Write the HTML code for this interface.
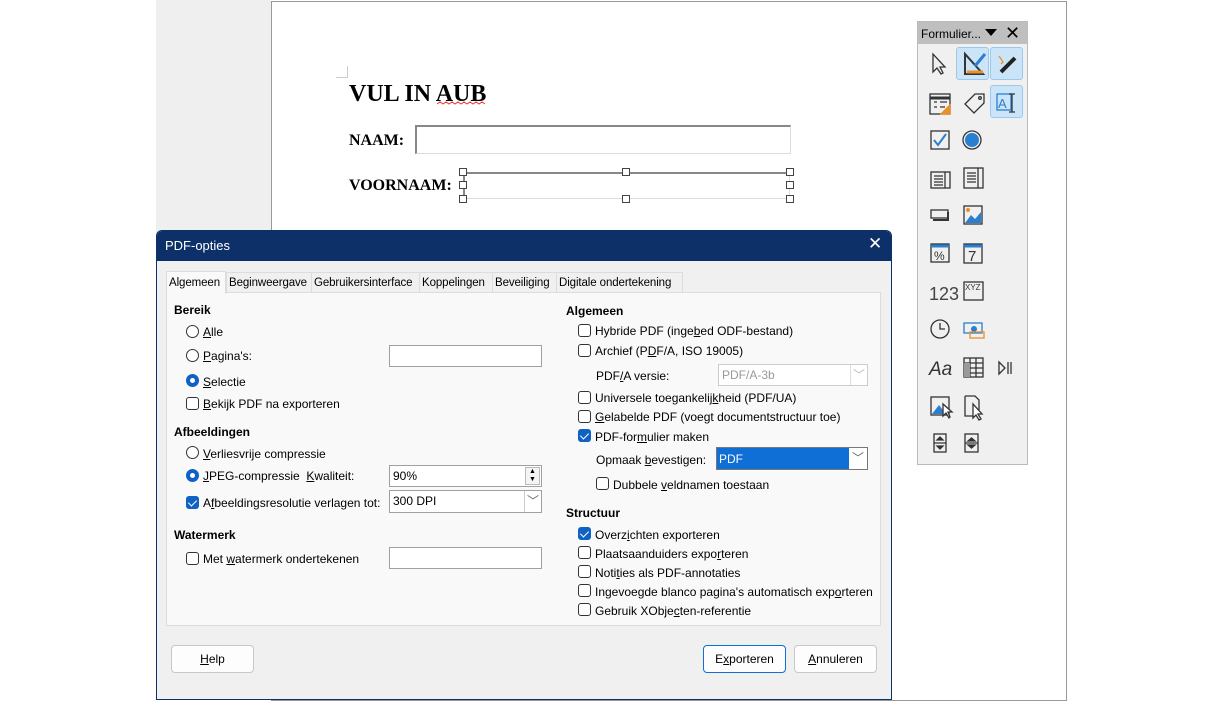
<!DOCTYPE html>
<html><head><meta charset="utf-8"><style>
*{margin:0;padding:0;box-sizing:border-box}
body{width:1223px;height:688px;position:relative;overflow:hidden;background:#fff;font-family:"Liberation Sans",sans-serif;font-size:12px;color:#000}
.a{position:absolute}
.t{position:absolute;white-space:nowrap;font-size:12px;line-height:14px}
.tab{font-size:11.5px;letter-spacing:-0.1px}
.b{font-weight:bold}
.cb{position:absolute;width:13px;height:13px;border:1px solid #333;border-radius:3px;background:#fff}
.cb.on{background:#0f62c4;border-color:#0f62c4}
.cb.on:after{content:"";position:absolute;left:3px;top:1px;width:4px;height:7px;border:solid #fff;border-width:0 1.5px 1.5px 0;transform:rotate(45deg)}
.rd{position:absolute;width:13px;height:13px;border:1px solid #333;border-radius:50%;background:#fff}
.rd.on{border:4px solid #0f62c4}
.in{position:absolute;background:#fff;border:1px solid #a0a0a0;padding:3px 3px;font-size:12px;line-height:14px}
.btn{position:absolute;background:#fdfdfd;border:1px solid #c8c8c8;border-radius:4px;text-align:center;line-height:26px;height:28px}
.h{position:absolute;width:8px;height:8px;border:1px solid #444;background:#fff}
u{text-decoration:underline}
.dd{position:absolute;font-size:12px;color:#666;text-align:center;line-height:20px}
</style></head><body>
<div class="a" style="left:156px;top:0;width:115px;height:688px;background:#efefef"></div>
<div class="a" style="left:271px;top:1px;width:796px;height:700px;border:1px solid #999;background:#fff"></div>
<div class="a" style="left:336px;top:66px;width:12px;height:12px;border-right:1px solid #ccc;border-bottom:1px solid #ccc"></div>
<div class="t b" style="left:349px;top:81px;font-family:'Liberation Serif',serif;font-size:24px;line-height:26px">VUL IN AUB</div>
<svg class="a" style="left:437px;top:101px" width="50" height="5"><path d="M0 3 L3 1 L6 3 L9 1 L12 3 L15 1 L18 3 L21 1 L24 3 L27 1 L30 3 L33 1 L36 3 L39 1 L42 3 L45 1 L48 3" stroke="#e33" fill="none" stroke-width="1"/></svg>
<div class="t b" style="left:349px;top:132px;font-family:'Liberation Serif',serif;font-size:16px;line-height:18px">NAAM:</div>
<div class="a" style="left:415px;top:125px;width:376px;height:29px;border:1px solid #ddd;border-top:2px solid #888;border-left:2px solid #888"></div>
<div class="t b" style="left:349px;top:177px;font-family:'Liberation Serif',serif;font-size:16px;line-height:18px">VOORNAAM:</div>
<div class="a" style="left:463px;top:172px;width:327px;height:27px;border:1px solid #ddd;border-top:2px solid #888;border-left:2px solid #888"></div>
<div class="h" style="left:459px;top:168px"></div><div class="h" style="left:622px;top:168px"></div><div class="h" style="left:786px;top:168px"></div>
<div class="h" style="left:459px;top:181px"></div><div class="h" style="left:786px;top:181px"></div>
<div class="h" style="left:459px;top:195px"></div><div class="h" style="left:622px;top:195px"></div><div class="h" style="left:786px;top:195px"></div>

<!-- toolbar -->
<div class="a" style="left:917px;top:21px;width:111px;height:444px;background:#f0f0f0;border:1px solid #bbb"></div>
<div class="a" style="left:918px;top:22px;width:109px;height:22px;background:#bfbfbf"></div>
<div class="t" style="left:921px;top:27px;font-size:12px">Formulier...</div>
<div class="a" style="left:985px;top:29px;width:0;height:0;border-left:6px solid transparent;border-right:6px solid transparent;border-top:7px solid #000"></div>
<div class="t" style="left:1005px;top:23px;font-size:18px;line-height:20px">✕</div>
<div class="a" style="left:956px;top:47px;width:33px;height:33px;background:#cce4f7;border:1px solid #99c9ef;border-radius:3px"></div>
<div class="a" style="left:990px;top:47px;width:33px;height:33px;background:#cce4f7;border:1px solid #99c9ef;border-radius:3px"></div>
<div class="a" style="left:990px;top:85px;width:33px;height:33px;background:#cce4f7;border:1px solid #99c9ef;border-radius:3px"></div>
<svg class="a" style="left:917px;top:44px" width="111" height="420" fill="none" stroke="#333" stroke-width="1.3">
<path d="M16 10 L16 28 L20 24 L24 30 L26 29 L23 23 L28 23 Z"/>
<path d="M48 10 L48 30 L66 30 Z" stroke="#333" stroke-width="2"/><path d="M50 28 L66 28" stroke="#e8902a" stroke-width="3"/><path d="M58 22 L68 10" stroke="#2a7fd0" stroke-width="3"/>
<path d="M84 28 L98 14" stroke="#222" stroke-width="4"/><path d="M82 12 L86 18 L84 20" stroke="#e8902a"/>
<rect x="13" y="50" width="20" height="20"/><path d="M13 54 H33" stroke-width="3"/><path d="M17 58h3M23 58h7M17 63h3M23 63h5"/><path d="M24 70 L33 61 L33 70 Z" fill="#e8902a" stroke="#e8902a"/>
<path d="M48 60 L58 50 L67 50 L67 59 L57 69 Z"/><circle cx="63" cy="54" r="1.3"/>
<rect x="80" y="50" width="14" height="16" stroke="#2a7fd0"/><text x="81" y="64" font-size="13" fill="#2a7fd0" stroke="none" font-family="Liberation Sans">A</text><path d="M95 50v18M92 50h6M92 68h6"/>
<rect x="14" y="87" width="18" height="18"/><path d="M17 96 L21 101 L29 90" stroke="#2a7fd0" stroke-width="2"/>
<circle cx="55" cy="96" r="9"/><circle cx="55" cy="96" r="7" fill="#2a7fd0" stroke="none"/>
<rect x="14" y="128" width="19" height="16"/><path d="M17 132h9M17 135h9M17 138h9M17 141h9M28 128v16"/>
<rect x="47" y="124" width="19" height="20"/><path d="M50 129h9M50 132h9M50 135h9M50 138h9M61 124v20"/>
<rect x="14" y="166" width="17" height="8"/><path d="M31 168v8H16" stroke-width="2"/>
<rect x="47" y="162" width="18" height="18"/><path d="M48 179 L54 171 L58 175 L64 168 V179Z" fill="#2a7fd0" stroke="none"/><circle cx="51" cy="166" r="2" fill="#e8902a" stroke="none"/>
<rect x="14" y="200" width="18" height="18"/><path d="M14 202h18" stroke="#2a7fd0" stroke-width="3"/><text x="17" y="216" font-size="12" fill="#333" stroke="none">%</text>
<rect x="47" y="200" width="18" height="19"/><path d="M47 202h18" stroke="#2a7fd0" stroke-width="3"/><text x="51" y="217" font-size="15" fill="#333" stroke="none">7</text>
<text x="12" y="256" font-size="18" fill="#444" stroke="none">123</text>
<rect x="47" y="238" width="19" height="18"/><text x="48" y="246" font-size="8" fill="#333" stroke="none">XYZ</text>
<circle cx="23" cy="285" r="9"/><path d="M23 279v6h5"/>
<rect x="47" y="279" width="18" height="10" stroke="#2a7fd0"/><circle cx="57" cy="285" r="3" fill="#2a7fd0" stroke="none"/><rect x="53" y="288" width="14" height="6" stroke="#e8902a"/>
<text x="12" y="331" font-size="19" font-style="italic" fill="#333" stroke="none">Aa</text>
<rect x="47" y="314" width="19" height="19"/><path d="M47 319h19M47 324h19M47 329h19M53 314v19M59 314v19"/><rect x="47" y="319" width="6" height="14" fill="#999" stroke="none"/>
<path d="M82 318 L88 324 L82 330 Z M91 318v12M94 318v12"/>
<rect x="14" y="353" width="18" height="18"/><path d="M15 370 L22 361 L25 365 L28 370Z" fill="#2a7fd0" stroke="none"/><path d="M26 360 L26 372 L29 369 L32 374 L33 373 L31 368 L35 368Z" fill="#fff"/>
<path d="M48 352 H58 L62 356 V366 M48 352 V372 H56"/><path d="M56 360 L56 374 L59 371 L62 376 L64 375 L61 370 L65 370Z" fill="#fff"/>
<rect x="17" y="390" width="12" height="18"/><path d="M20 396 L23 393 L26 396Z M20 402 L23 405 L26 402Z M17 399h12" fill="#333"/>
<rect x="48" y="390" width="13" height="18"/><path d="M51 397 L54.5 394 L58 397Z M51 401 L54.5 404 L58 401Z M48 399h13" fill="#333"/>
</svg>

<!-- dialog -->
<div class="a" style="left:156px;top:230px;width:736px;height:470px;background:#f0f0f0;border:1px solid #0d3068;border-radius:6px 6px 0 0;overflow:hidden">
<div class="a" style="left:0;top:0;width:736px;height:30px;background:#0d3068"></div>
</div>
<div class="t" style="left:165px;top:238px;color:#fff;font-size:13px;line-height:15px">PDF-opties</div>
<div class="t" style="left:868px;top:234px;color:#fff;font-size:17px;line-height:20px">✕</div>
<div class="a" style="left:166px;top:292px;width:715px;height:334px;background:#f9f9f9;border:1px solid #dcdcdc"></div>
<div class="a" style="left:226px;top:272px;width:457px;height:21px;border:1px solid #dcdcdc;background:#f0f0f0"></div>
<div class="a" style="left:166px;top:271px;width:60px;height:23px;background:#f9f9f9;border:1px solid #dcdcdc;border-bottom:none"></div>
<div class="t tab" style="left:169px;top:276px">Algemeen</div>
<div class="t tab" style="left:229px;top:276px">Beginweergave</div>
<div class="a" style="left:311px;top:272px;width:1px;height:21px;background:#dcdcdc"></div>
<div class="t tab" style="left:314px;top:276px">Gebruikersinterface</div>
<div class="a" style="left:419px;top:272px;width:1px;height:21px;background:#dcdcdc"></div>
<div class="t tab" style="left:422px;top:276px">Koppelingen</div>
<div class="a" style="left:492px;top:272px;width:1px;height:21px;background:#dcdcdc"></div>
<div class="t tab" style="left:495px;top:276px">Beveiliging</div>
<div class="a" style="left:556px;top:272px;width:1px;height:21px;background:#dcdcdc"></div>
<div class="t tab" style="left:559px;top:276px">Digitale ondertekening</div>

<div class="t b" style="left:174px;top:303px">Bereik</div>
<div class="rd" style="left:186px;top:325px"></div><div class="t" style="left:203px;top:325px"><u>A</u>lle</div>
<div class="rd" style="left:186px;top:349px"></div><div class="t" style="left:203px;top:349px"><u>P</u>agina's:</div>
<div class="in" style="left:389px;top:345px;width:153px;height:22px"></div>
<div class="rd on" style="left:186px;top:374px"></div><div class="t" style="left:203px;top:375px"><u>S</u>electie</div>
<div class="cb" style="left:186px;top:397px"></div><div class="t" style="left:203px;top:397px"><u>B</u>ekijk PDF na exporteren</div>

<div class="t b" style="left:174px;top:425px">Afbeeldingen</div>
<div class="rd" style="left:186px;top:446px"></div><div class="t" style="left:203px;top:447px"><u>V</u>erliesvrije compressie</div>
<div class="rd on" style="left:186px;top:469px"></div><div class="t" style="left:203px;top:469px"><u>J</u>PEG-compressie&nbsp; <u>K</u>waliteit:</div>
<div class="in" style="left:389px;top:465px;width:153px;height:22px">90%</div>
<div class="a" style="left:525px;top:467px;width:15px;height:18px;border:1px solid #bbb;background:#f4f4f4;font-size:7px;line-height:8px;text-align:center">▲<br>▼</div>
<div class="cb on" style="left:186px;top:496px"></div><div class="t" style="left:203px;top:496px">A<u>f</u>beeldingsresolutie verlagen tot:</div>
<div class="in" style="left:389px;top:490px;width:153px;height:23px">300 DPI</div>
<div class="dd" style="left:524px;top:491px;width:17px;height:21px;border-left:1px solid #ccc">﹀</div>

<div class="t b" style="left:174px;top:528px">Watermerk</div>
<div class="cb" style="left:186px;top:552px"></div><div class="t" style="left:203px;top:552px">Met <u>w</u>atermerk ondertekenen</div>
<div class="in" style="left:389px;top:547px;width:153px;height:22px"></div>

<div class="t b" style="left:566px;top:304px">Algemeen</div>
<div class="cb" style="left:578px;top:324px"></div><div class="t" style="left:595px;top:324px">Hybride PDF (inge<u>b</u>ed ODF-bestand)</div>
<div class="cb" style="left:578px;top:344px"></div><div class="t" style="left:595px;top:344px">Archief (P<u>D</u>F/A, ISO 19005)</div>
<div class="t" style="left:596px;top:369px">PDF<u>/</u>A versie:</div>
<div class="in" style="left:718px;top:364px;width:150px;height:22px;color:#999;border-color:#ccc">PDF/A-3b</div>
<div class="dd" style="left:850px;top:365px;width:17px;height:20px;border-left:1px solid #ddd;color:#bbb">﹀</div>
<div class="cb" style="left:578px;top:391px"></div><div class="t" style="left:595px;top:391px">Universele toegankelij<u>k</u>heid (PDF/UA)</div>
<div class="cb" style="left:578px;top:410px"></div><div class="t" style="left:595px;top:410px"><u>G</u>elabelde PDF (voegt documentstructuur toe)</div>
<div class="cb on" style="left:578px;top:429px"></div><div class="t" style="left:595px;top:430px">PDF-for<u>m</u>ulier maken</div>
<div class="t" style="left:596px;top:453px">Opmaak <u>b</u>evestigen:</div>
<div class="a" style="left:716px;top:447px;width:152px;height:23px;border:1px solid #777;background:#0f6fd6"></div>
<div class="t" style="left:719px;top:452px;color:#fff">PDF</div>
<div class="dd" style="left:849px;top:448px;width:18px;height:21px;background:#fff">﹀</div>
<div class="cb" style="left:596px;top:477px"></div><div class="t" style="left:613px;top:478px">Dubbele <u>v</u>eldnamen toestaan</div>

<div class="t b" style="left:566px;top:506px">Structuur</div>
<div class="cb on" style="left:578px;top:527px"></div><div class="t" style="left:595px;top:528px">Overz<u>i</u>chten exporteren</div>
<div class="cb" style="left:578px;top:546px"></div><div class="t" style="left:595px;top:547px">Plaatsaanduiders expo<u>r</u>teren</div>
<div class="cb" style="left:578px;top:565px"></div><div class="t" style="left:595px;top:566px">Noti<u>t</u>ies als PDF-annotaties</div>
<div class="cb" style="left:578px;top:584px"></div><div class="t" style="left:595px;top:585px">Ingevoegde blanco pagina's automatisch exp<u>o</u>rteren</div>
<div class="cb" style="left:578px;top:603px"></div><div class="t" style="left:595px;top:604px">Gebruik XObje<u>c</u>ten-referentie</div>

<div class="btn" style="left:171px;top:645px;width:83px"><u>H</u>elp</div>
<div class="btn" style="left:703px;top:645px;width:83px;border-color:#0f6fd6">E<u>x</u>porteren</div>
<div class="btn" style="left:794px;top:645px;width:83px"><u>A</u>nnuleren</div>
</body></html>
